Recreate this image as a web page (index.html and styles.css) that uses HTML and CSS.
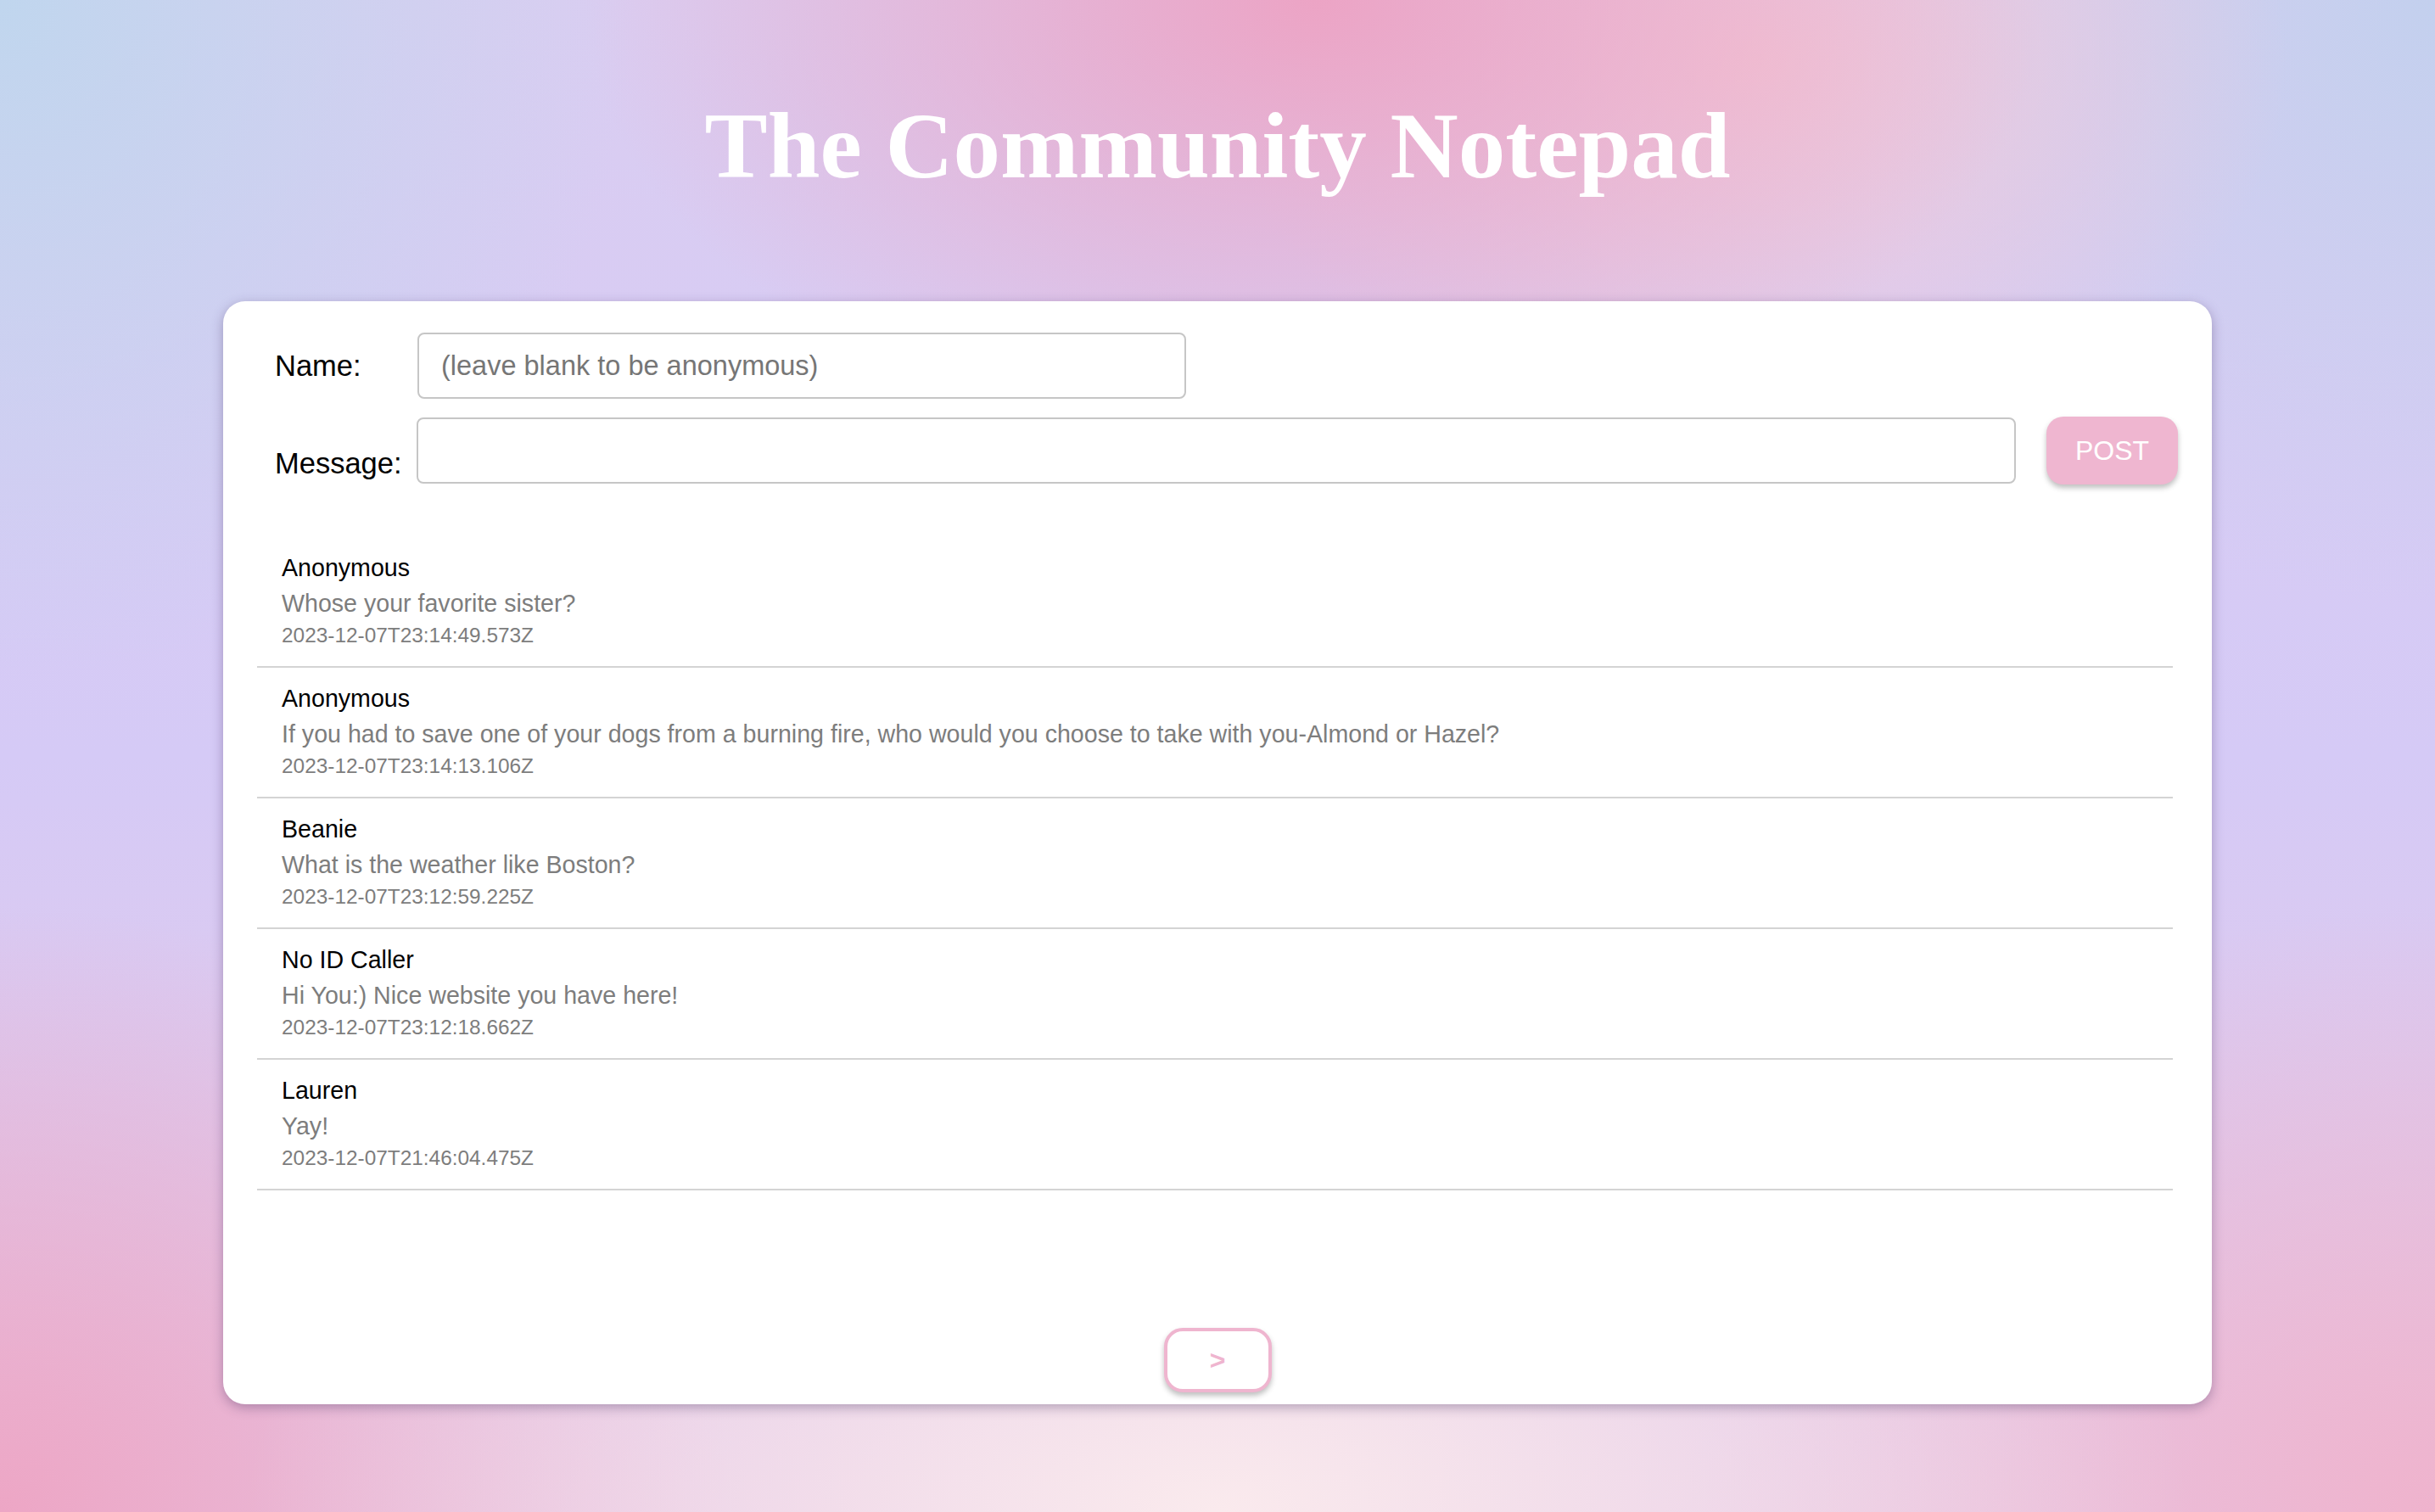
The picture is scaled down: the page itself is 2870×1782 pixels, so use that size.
FILE: index.html
```html
<!DOCTYPE html>
<html lang="en">
<head>
<meta charset="utf-8">
<title>The Community Notepad</title>
<link rel="stylesheet" href="styles.css">
</head>
<body>
<h1 class="title">The Community Notepad</h1>
<main class="card">
  <form class="form">
    <div class="row row-name">
      <label class="label label-name" for="name">Name:</label>
      <input class="field field-name" id="name" type="text" placeholder="(leave blank to be anonymous)">
    </div>
    <div class="row row-message">
      <label class="label label-msg" for="msg">Message:</label>
      <input class="field field-msg" id="msg" type="text">
      <button class="post" type="button">POST</button>
    </div>
  </form>
  <ul class="notes">
    <li class="note">
      <div class="note-name">Anonymous</div>
      <div class="note-text">Whose your favorite sister?</div>
      <div class="note-date">2023-12-07T23:14:49.573Z</div>
    </li>
    <li class="note">
      <div class="note-name">Anonymous</div>
      <div class="note-text">If you had to save one of your dogs from a burning fire, who would you choose to take with you-Almond or Hazel?</div>
      <div class="note-date">2023-12-07T23:14:13.106Z</div>
    </li>
    <li class="note">
      <div class="note-name">Beanie</div>
      <div class="note-text">What is the weather like Boston?</div>
      <div class="note-date">2023-12-07T23:12:59.225Z</div>
    </li>
    <li class="note">
      <div class="note-name">No ID Caller</div>
      <div class="note-text">Hi You:) Nice website you have here!</div>
      <div class="note-date">2023-12-07T23:12:18.662Z</div>
    </li>
    <li class="note">
      <div class="note-name">Lauren</div>
      <div class="note-text">Yay!</div>
      <div class="note-date">2023-12-07T21:46:04.475Z</div>
    </li>
  </ul>
  <div class="pager">
    <button class="next" type="button">&gt;</button>
  </div>
</main>
</body>
</html>
```

FILE: styles.css
```css
html, body {
  margin: 0;
  padding: 0;
}

body {
  min-height: 1782px;
  font-family: "Liberation Sans", Arial, sans-serif;
  background:
    radial-gradient(ellipse 30% 30% at 54% 0%, rgba(236, 164, 197, 1), rgba(236, 164, 197, 0)),
    radial-gradient(ellipse 22% 26% at 72% 4%, rgba(242, 200, 214, 0.95), rgba(242, 200, 214, 0)),
    radial-gradient(ellipse 26% 45% at 0% 0%, rgba(192, 214, 238, 1), rgba(192, 214, 238, 0)),
    radial-gradient(ellipse 24% 40% at 100% 0%, rgba(195, 208, 238, 1), rgba(195, 208, 238, 0)),
    radial-gradient(ellipse 40% 35% at 50% 100%, rgba(250, 234, 237, 1), rgba(250, 234, 237, 0)),
    radial-gradient(ellipse 30% 40% at 0% 100%, rgba(237, 166, 197, 1), rgba(237, 166, 197, 0)),
    radial-gradient(ellipse 30% 40% at 100% 100%, rgba(239, 179, 205, 1), rgba(239, 179, 205, 0)),
    linear-gradient(180deg, #dacdf1 0%, #d5caf6 50%, #e6c9e6 100%);
}

.title {
  margin: 105px 0 0;
  text-align: center;
  font-family: "Liberation Serif", "Times New Roman", serif;
  font-weight: bold;
  font-size: 111px;
  line-height: 133px;
  color: #ffffff;
}

.card {
  box-sizing: border-box;
  width: 2344px;
  height: 1300px;
  margin: 117px auto 0;
  padding: 37px 40px 14px 40px;
  background: #ffffff;
  border-radius: 26px;
  box-shadow: 0 4px 14px rgba(60, 40, 90, 0.35);
  display: flex;
  flex-direction: column;
}

.form {
  padding-left: 21px;
}

.row {
  display: flex;
  align-items: center;
}

.row-name {
  height: 78px;
}

.row-message {
  margin-top: 21px;
  height: 80px;
}

.label {
  font-size: 34.5px;
  line-height: 40px;
  color: #000000;
}

.label-name {
  width: 168px;
  flex: none;
}

.label-msg {
  align-self: flex-end;
  margin: 0 17px 5px 0;
}

.field {
  box-sizing: border-box;
  height: 78px;
  border: 2px solid #c6c6c6;
  border-radius: 8px;
  padding: 0 26px;
  font-family: "Liberation Sans", Arial, sans-serif;
  font-size: 32.5px;
  color: #000000;
  background: #ffffff;
  outline: none;
}

.field::placeholder {
  color: #767676;
}

.field-name {
  width: 906px;
}

.field-msg {
  flex: 1;
  min-width: 0;
}

.post {
  flex: none;
  width: 155px;
  height: 80px;
  margin-left: 36px;
  border: none;
  border-radius: 20px;
  background: #efb6d0;
  color: #ffffff;
  font-family: "Liberation Sans", Arial, sans-serif;
  font-size: 32px;
  box-shadow: 0 4px 6px rgba(0, 0, 0, 0.25);
  padding: 0;
}

.notes {
  list-style: none;
  margin: 62px 6px 0 0;
  padding: 0;
}

.note {
  padding: 15px 0 20px 29px;
  border-bottom: 2px solid #d4d4d4;
}

.note-name {
  font-size: 28.6px;
  line-height: 42px;
  color: #000000;
}

.note-text {
  font-size: 28.6px;
  line-height: 42px;
  color: #7d7d7d;
}

.note-date {
  font-size: 24.4px;
  line-height: 33px;
  color: #7d7d7d;
}

.pager {
  margin-top: auto;
  display: flex;
  justify-content: center;
}

.next {
  box-sizing: border-box;
  width: 127px;
  height: 76px;
  border: 4px solid #efb5cf;
  border-radius: 22px;
  background: #ffffff;
  color: #efb5cf;
  font-family: "Liberation Sans", Arial, sans-serif;
  font-size: 32px;
  font-weight: bold;
  padding: 0;
  box-shadow: 0 4px 6px rgba(0, 0, 0, 0.25);
}
```
